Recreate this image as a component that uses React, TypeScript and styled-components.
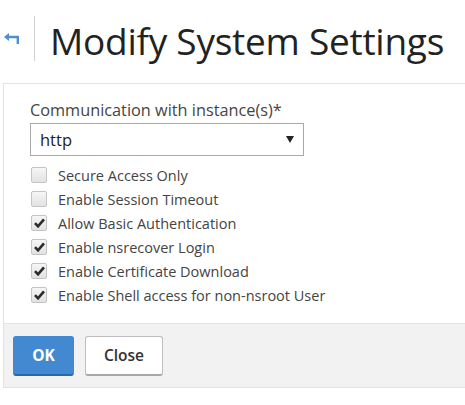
import React from "react";
import styled, { createGlobalStyle } from "styled-components";

const Global = createGlobalStyle`
  html, body { margin: 0; padding: 0; background: #fff; overflow: hidden; }
  body { font-family: "Open Sans", "Noto Sans", sans-serif; color: #333; }
`;

const Page = styled.div`
  width: 465px;
  height: 405px;
  display: flex;
  flex-direction: column;
`;

const Header = styled.div`
  height: 83px;
  display: flex;
  align-items: flex-start;
  padding-left: 4px;
  box-sizing: border-box;
`;

const BackButton = styled.button`
  border: none;
  background: none;
  padding: 0;
  margin-top: 33px;
  width: 16px;
  height: 11px;
  display: flex;
  cursor: pointer;
`;

const Divider = styled.div`
  width: 1px;
  height: 45px;
  margin-top: 16px;
  margin-left: 14px;
  background: #d0d0d0;
`;

const Title = styled.h1`
  margin: 18px 0 0 15px;
  font-size: 37px;
  line-height: 45px;
  font-weight: 400;
  color: #222;
  white-space: nowrap;
  letter-spacing: -0.25px;
`;

const Panel = styled.div`
  margin-left: 3px;
  border: 1px solid #e2e2e2;
  border-right: none;
  display: flex;
  flex-direction: column;
`;

const Body = styled.div`
  padding: 16px 0 20px 26px;
  display: flex;
  flex-direction: column;
`;

const Label = styled.label`
  font-size: 16.3px;
  line-height: 20px;
  color: #444;
  margin-bottom: 3px;
`;

const SelectBox = styled.div`
  width: 274px;
  height: 33px;
  box-sizing: border-box;
  border: 1px solid #a9a9a9;
  display: flex;
  align-items: center;
  justify-content: space-between;
  padding: 0 9px 0 9px;
  font-size: 16.5px;
  color: #222;
  margin-bottom: 11px;
`;

const Caret = styled.span`
  width: 0;
  height: 0;
  border-left: 4px solid transparent;
  border-right: 4px solid transparent;
  border-top: 7px solid #222;
`;

const CheckList = styled.div`
  display: flex;
  flex-direction: column;
  gap: 8px;
`;

const CheckRow = styled.div`
  display: flex;
  align-items: center;
  gap: 11px;
  height: 16px;
  font-size: 14.5px;
  color: #444;
`;

const Box = styled.span`
  width: 16px;
  height: 16px;
  box-sizing: border-box;
  border: 1px solid #c4c4c4;
  border-radius: 2px;
  background: linear-gradient(#f6f6f6, #e2e2e2);
  display: flex;
  align-items: center;
  justify-content: center;
  margin-left: 1px;
`;

const Footer = styled.div`
  height: 63px;
  background: #f2f2f2;
  border-top: 1px solid #e2e2e2;
  display: flex;
  align-items: center;
  padding-left: 9px;
  gap: 11px;
`;

const Button = styled.button<{ $primary?: boolean }>`
  height: 40px;
  box-sizing: border-box;
  border-radius: 3px;
  font-family: "Open Sans", "Noto Sans", sans-serif;
  font-size: 15.5px;
  font-weight: ${(p) => (p.$primary ? 700 : 600)};
  padding: 0;
  width: ${(p) => (p.$primary ? "61px" : "78px")};
  color: ${(p) => (p.$primary ? "#fff" : "#333")};
  background: ${(p) => (p.$primary ? "#4289d1" : "#fff")};
  border: 1px solid ${(p) => (p.$primary ? "#4289d1" : "#bdbdbd")};
  border-bottom: 2px solid ${(p) => (p.$primary ? "#2a68a8" : "#a8a8a8")};
`;

const Check = () => (
  <svg width="11" height="10" viewBox="0 0 11 10">
    <path d="M1 5.2 L4 8.3 L10 1.3" stroke="#2b2b2b" strokeWidth="2.6" fill="none" />
  </svg>
);

const items: [string, boolean][] = [
  ["Secure Access Only", false],
  ["Enable Session Timeout", false],
  ["Allow Basic Authentication", true],
  ["Enable nsrecover Login", true],
  ["Enable Certificate Download", true],
  ["Enable Shell access for non-nsroot User", true],
];

export default function App() {
  return (
    <Page>
      <Global />
      <Header>
        <BackButton aria-label="Back">
          <svg width="16" height="11" viewBox="0 0 16 11">
            <path d="M0 4 L5 0 L5 8 Z" fill="#4d8fd1" />
            <path d="M4 4 H13.8 V11" stroke="#4d8fd1" strokeWidth="2.4" fill="none" />
          </svg>
        </BackButton>
        <Divider />
        <Title>Modify System Settings</Title>
      </Header>
      <Panel>
        <Body>
          <Label>Communication with instance(s)*</Label>
          <SelectBox>
            <span>http</span>
            <Caret />
          </SelectBox>
          <CheckList>
            {items.map(([t, c]) => (
              <CheckRow key={t}>
                <Box>{c && <Check />}</Box>
                <span>{t}</span>
              </CheckRow>
            ))}
          </CheckList>
        </Body>
        <Footer>
          <Button $primary>OK</Button>
          <Button>Close</Button>
        </Footer>
      </Panel>
    </Page>
  );
}
